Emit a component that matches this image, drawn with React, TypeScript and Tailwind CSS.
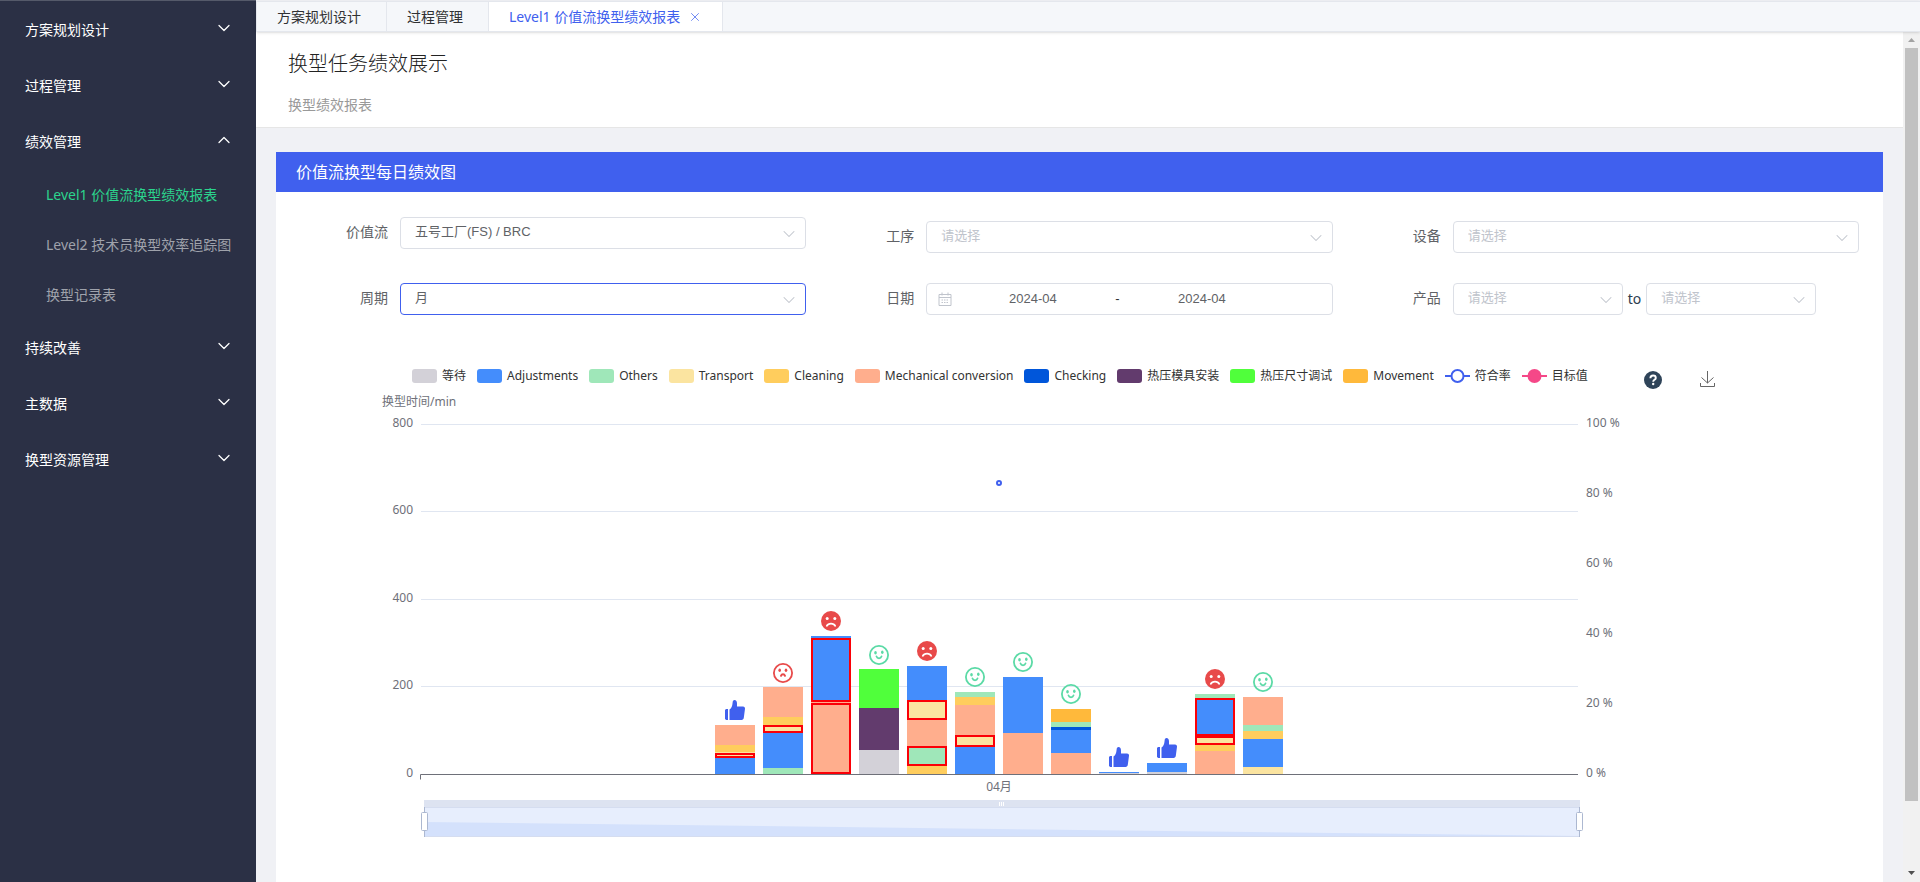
import { ReactNode } from 'react'
import { ChevronDown, ChevronUp, X } from 'lucide-react'

const COLORS = {
  wait: '#d3d1d8',
  adjust: '#448dfc',
  others: '#9fe7b9',
  transport: '#fbe4a0',
  cleaning: '#ffcd5d',
  mechanical: '#ffae8d',
  checking: '#0056da',
  mould: '#623b6d',
  size: '#50ff3b',
  movement: '#ffb93b',
}

type ColorKey = keyof typeof COLORS
type Mood = 'like' | 'smile' | 'sad' | 'sadFilled'

interface Segment {
  key: ColorKey
  h: number
  alert?: boolean
}

interface BarData {
  mood: Mood
  moodY: number
  // Listed from the axis upwards
  segments: Segment[]
}

const BASE = 385
const BAR_START = 439
const BAR_STEP = 48
const BAR_WIDTH = 40

const bars: BarData[] = [
  {
    mood: 'like',
    moodY: 311,
    segments: [
      { key: 'adjust', h: 16 },
      { key: 'transport', h: 5, alert: true },
      { key: 'transport', h: 1 },
      { key: 'cleaning', h: 7 },
      { key: 'mechanical', h: 20 },
    ],
  },
  {
    mood: 'sad',
    moodY: 274,
    segments: [
      { key: 'others', h: 6 },
      { key: 'adjust', h: 35 },
      { key: 'transport', h: 8, alert: true },
      { key: 'cleaning', h: 8 },
      { key: 'mechanical', h: 30 },
    ],
  },
  {
    mood: 'sadFilled',
    moodY: 222,
    segments: [
      { key: 'mechanical', h: 71, alert: true },
      { key: 'mechanical', h: 1 },
      { key: 'adjust', h: 64, alert: true },
      { key: 'adjust', h: 2 },
    ],
  },
  {
    mood: 'smile',
    moodY: 256,
    segments: [
      { key: 'wait', h: 24 },
      { key: 'mould', h: 42 },
      { key: 'size', h: 39 },
    ],
  },
  {
    mood: 'sadFilled',
    moodY: 252,
    segments: [
      { key: 'cleaning', h: 8 },
      { key: 'others', h: 20, alert: true },
      { key: 'mechanical', h: 26 },
      { key: 'transport', h: 20, alert: true },
      { key: 'adjust', h: 34 },
    ],
  },
  {
    mood: 'smile',
    moodY: 278,
    segments: [
      { key: 'adjust', h: 27 },
      { key: 'transport', h: 12, alert: true },
      { key: 'mechanical', h: 30 },
      { key: 'cleaning', h: 8 },
      { key: 'others', h: 5 },
    ],
  },
  {
    mood: 'smile',
    moodY: 263,
    segments: [
      { key: 'mechanical', h: 41 },
      { key: 'adjust', h: 56 },
    ],
  },
  {
    mood: 'smile',
    moodY: 295,
    segments: [
      { key: 'mechanical', h: 21 },
      { key: 'adjust', h: 23 },
      { key: 'checking', h: 3 },
      { key: 'others', h: 5 },
      { key: 'movement', h: 13 },
    ],
  },
  {
    mood: 'like',
    moodY: 358,
    segments: [
      { key: 'wait', h: 1 },
      { key: 'adjust', h: 1 },
    ],
  },
  {
    mood: 'like',
    moodY: 349,
    segments: [
      { key: 'wait', h: 2 },
      { key: 'adjust', h: 9 },
    ],
  },
  {
    mood: 'sadFilled',
    moodY: 280,
    segments: [
      { key: 'mechanical', h: 23 },
      { key: 'cleaning', h: 6 },
      { key: 'transport', h: 9, alert: true },
      { key: 'adjust', h: 38, alert: true },
      { key: 'others', h: 4 },
    ],
  },
  {
    mood: 'smile',
    moodY: 283,
    segments: [
      { key: 'transport', h: 7 },
      { key: 'adjust', h: 28 },
      { key: 'cleaning', h: 8 },
      { key: 'others', h: 6 },
      { key: 'mechanical', h: 28 },
    ],
  },
]

const legend: { label: string; key: ColorKey }[] = [
  { label: '等待', key: 'wait' },
  { label: 'Adjustments', key: 'adjust' },
  { label: 'Others', key: 'others' },
  { label: 'Transport', key: 'transport' },
  { label: 'Cleaning', key: 'cleaning' },
  { label: 'Mechanical conversion', key: 'mechanical' },
  { label: 'Checking', key: 'checking' },
  { label: '热压模具安装', key: 'mould' },
  { label: '热压尺寸调试', key: 'size' },
  { label: 'Movement', key: 'movement' },
]

function MoodIcon({ mood, x, y }: { mood: Mood; x: number; y: number }) {
  if (mood === 'like') {
    return (
      <g transform={`translate(${x} ${y})`} fill="#4060ee">
        <path d="M1 9h2v11H1.200L0 19V10z" />
        <path d="M4.500 20V9.400C6.400 8.300 7.300 6.500 7.600 2.800 7.700 1 8.400 0 9.400 0c1.800 0 2.600 1.500 2.600 3.400V6.500h6c1.400 0 2.200 1 2 2.300l-1.200 9c-.2 1.300-1 2.200-2.200 2.200z" />
      </g>
    )
  }
  if (mood === 'smile') {
    return (
      <g transform={`translate(${x} ${y})`} fill="none" stroke="#5bdaa6">
        <circle cx="10" cy="10" r="9.100" strokeWidth="1.800" />
        <ellipse cx="6.500" cy="7.700" rx="1.300" ry="1.700" fill="#5bdaa6" stroke="none" />
        <ellipse cx="13.300" cy="7.300" rx="1.300" ry="1.700" fill="#5bdaa6" stroke="none" />
        <path d="M7.400 11.300c.5 1.500 1.500 2 2.600 2s2.100-.5 2.600-2" strokeWidth="1.700" strokeLinecap="round" />
      </g>
    )
  }
  if (mood === 'sad') {
    return (
      <g transform={`translate(${x} ${y})`} fill="none" stroke="#e84a4a">
        <circle cx="10" cy="10" r="9.100" strokeWidth="1.800" />
        <ellipse cx="6.700" cy="7.300" rx="1.300" ry="1.700" fill="#e84a4a" stroke="none" />
        <ellipse cx="13" cy="7.300" rx="1.300" ry="1.700" fill="#e84a4a" stroke="none" />
        <path d="M8 12.800c.4-1.100 1.100-1.500 2-1.500s1.600.4 2 1.500" strokeWidth="2" strokeLinecap="round" />
      </g>
    )
  }
  return (
    <g transform={`translate(${x} ${y})`}>
      <circle cx="10" cy="10" r="10" fill="#e84a4a" />
      <circle cx="6.200" cy="7.400" r="1.500" fill="#fff" />
      <circle cx="13.800" cy="7.400" r="1.500" fill="#fff" />
      <path d="M5.800 14.800c.8-1.500 2.200-2.200 4.200-2.200s3.400.7 4.200 2.200" fill="none" stroke="#fff" strokeWidth="1.800" strokeLinecap="round" />
    </g>
  )
}

function Bar({ bar, index }: { bar: BarData; index: number }) {
  const x = BAR_START + index * BAR_STEP
  let top = BASE

  const rects = bar.segments.map((s, i) => {
    top -= s.h
    return s.alert ? (
      <rect key={i} x={x + 1} y={top + 1} width={BAR_WIDTH - 2} height={s.h - 2} fill={COLORS[s.key]} stroke="#fb0007" strokeWidth="2" />
    ) : (
      <rect key={i} x={x} y={top} width={BAR_WIDTH} height={s.h} fill={COLORS[s.key]} />
    )
  })

  return (
    <g>
      {rects}
      <MoodIcon mood={bar.mood} x={x + 10} y={bar.moodY} />
    </g>
  )
}

function Chart() {
  return (
    <svg viewBox="0 0 1607 493" className="block w-full text-[12px]" fill="#6e7079" role="img" aria-label="换型时间/min">
      <text x="106" y="17">换型时间/min</text>

      {/* Left axis */}
      {[800, 600, 400, 200, 0].map((v) => {
        const y = Math.floor(BASE - v * 0.4375)
        return (
          <g key={v}>
            {v > 0 && <path d={`M145 ${y + 0.5}H1302`} stroke="#e0e6f1" />}
            <text x="137" y={y + 3} textAnchor="end">{v}</text>
          </g>
        )
      })}

      {/* Right axis */}
      {[100, 80, 60, 40, 20, 0].map((v) => (
        <text key={v} x="1310" y={BASE + 3 - v * 3.5}>{v} %</text>
      ))}

      {bars.map((bar, i) => (
        <Bar key={i} bar={bar} index={i} />
      ))}

      <path d="M144.500 390.500V385.500H1302" fill="none" stroke="#6e7079" />
      <text x="723" y="402" textAnchor="middle">04月</text>
      <circle cx="723" cy="94" r="2" fill="#fff" stroke="#4060ee" strokeWidth="2" />

      {/* Data zoom */}
      <path d="M148 411h1156v7H148z" fill="#dde3f1" />
      <path d="M148 418h1156v29H148z" fill="#e7eefd" />
      <path d="M148 433L1304 447H148z" fill="#d4e1fc" />
      <path d="M148 418.500H1304M148 447.500H1304" stroke="#d5ddf0" />
      <path d="M723.500 413v4M725.500 413v4M727.500 413v4" stroke="#fff" />
      <path d="M148.500 418V448M1303.500 418V448" stroke="#acb8d1" />
      <rect x="145.500" y="423.500" width="6" height="18" rx="1" fill="#fff" stroke="#acb8d1" />
      <rect x="1300.500" y="423.500" width="6" height="18" rx="1" fill="#fff" stroke="#acb8d1" />
    </svg>
  )
}

function MenuGroup({ label, open, children }: { label: string; open?: boolean; children?: ReactNode }) {
  const Arrow = open ? ChevronUp : ChevronDown
  return (
    <li>
      <button className="flex h-14 w-full items-center justify-between pl-[25px] pr-[22px] text-white">
        <span>{label}</span>
        <Arrow className="mb-1 h-5 w-5" strokeWidth={1.5} />
      </button>
      {children && <ul>{children}</ul>}
    </li>
  )
}

function MenuItem({ label, active }: { label: string; active?: boolean }) {
  return (
    <li>
      <a href="#" className={`flex h-[50px] items-center whitespace-nowrap pl-[46px] ${active ? 'text-[#2bd48d]' : 'text-[#9fa2ab]'}`}>
        {label}
      </a>
    </li>
  )
}

function Field({ label, id, children }: { label: string; id: string; children: ReactNode }) {
  return (
    <div className="flex items-center">
      <label htmlFor={id} className="w-[120px] pb-0.5 pr-3 text-right text-[#606266]">{label}</label>
      <div className="flex flex-1 items-center">{children}</div>
    </div>
  )
}

function Select({ id, value, focused, width = 'w-full' }: { id: string; value?: string; focused?: boolean; width?: string }) {
  return (
    <div className={`relative ${width}`}>
      <select
        id={id}
        aria-label={id}
        className={`block h-8 w-full appearance-none rounded border bg-white px-[14px] pb-0.5 text-[13px] outline-none ${
          focused ? 'border-[#4060ee]' : 'border-[#dcdfe6]'
        } ${value ? 'text-[#606266]' : 'text-[#c0c4cc]'}`}
      >
        <option>{value || '请选择'}</option>
      </select>
      <ChevronDown className="pointer-events-none absolute right-[7px] top-[7px] h-5 w-5 text-[#c0c4cc]" strokeWidth={1.25} />
    </div>
  )
}

function CalendarIcon() {
  return (
    <svg className="h-[14px] w-[14px] shrink-0" viewBox="0 0 14 14" fill="none" stroke="#c0c4cc">
      <path d="M1 2.500h12v11H1zM1 5.500h12M4 .5v3M10 .5v3" />
      <path d="M3.500 8h7M3.500 10.500h7" strokeDasharray="1.500 1" />
    </svg>
  )
}

function LineMark({ color, fill }: { color: string; fill: string }) {
  return (
    <svg width="25" height="14" viewBox="0 0 25 14">
      <path d="M0 7h25" stroke={color} strokeWidth="2" />
      <circle cx="12.500" cy="7" r="6" fill={fill} stroke={color} strokeWidth="2" />
    </svg>
  )
}

export default function App() {
  return (
    <div className="flex h-screen overflow-hidden bg-[#f0f1f5] font-['Noto_Sans','Noto_Sans_CJK_SC',sans-serif] text-[14px] leading-5">
      {/* Sidebar */}
      <nav className="w-64 shrink-0 border-t border-[#555a6a] bg-[#2b3045] pt-px">
        <ul>
          <MenuGroup label="方案规划设计" />
          <MenuGroup label="过程管理" />
          <MenuGroup label="绩效管理" open>
            <MenuItem label="Level1 价值流换型绩效报表" active />
            <MenuItem label="Level2 技术员换型效率追踪图" />
            <MenuItem label="换型记录表" />
          </MenuGroup>
          <MenuGroup label="持续改善" />
          <MenuGroup label="主数据" />
          <MenuGroup label="换型资源管理" />
        </ul>
      </nav>

      <div className="flex min-w-0 flex-1 flex-col pt-px">
        {/* Tabs */}
        <div className="relative flex h-[31px] shrink-0 border-y border-[#e4e7ed] bg-[#f5f7fa] text-[#303133] shadow-sm">
          <button className="border-x border-[#e4e7ed] pl-5 pr-[25px]">方案规划设计</button>
          <button className="border-r border-[#e4e7ed] pl-5 pr-[25px]">过程管理</button>
          <div className="flex items-center gap-2 border-r border-[#e4e7ed] bg-white px-5 text-[#4060ee]">
            <button>Level1 价值流换型绩效报表</button>
            <button aria-label="关闭"><X className="h-[14px] w-[14px]" strokeWidth={1.25} /></button>
          </div>
        </div>

        <div className="flex min-h-0 flex-1">
          <main className="flex min-w-0 flex-1 flex-col">
            <header className="h-24 shrink-0 border-b border-[#e6e6e6] bg-white px-8 pt-[18px]">
              <h1 className="text-[20px] font-light leading-7 text-[#222]">换型任务绩效展示</h1>
              <p className="mt-[17px] text-[#999]">换型绩效报表</p>
            </header>

            <section className="mx-5 mt-6 flex-1 bg-white">
              <h2 className="flex h-10 items-center bg-[#4060ee] px-5 text-[16px] text-white">价值流换型每日绩效图</h2>

              <form className="grid grid-cols-3 items-start gap-y-[30px] pl-1 pr-6 pt-[25px] font-['Liberation_Sans','Noto_Sans_CJK_SC',sans-serif]">
                <Field label="价值流" id="stream">
                  <Select id="stream" value="五号工厂(FS) / BRC" />
                </Field>
                <div className="pt-1">
                  <Field label="工序" id="process">
                    <Select id="process" />
                  </Field>
                </div>
                <div className="pt-1">
                  <Field label="设备" id="device">
                    <Select id="device" />
                  </Field>
                </div>
                <Field label="周期" id="period">
                  <Select id="period" value="月" focused />
                </Field>
                <Field label="日期" id="from">
                  <div className="flex h-8 w-full items-center rounded border border-[#dcdfe6] px-[11px] text-[13px] text-[#606266]">
                    <CalendarIcon />
                    <input id="from" className="ml-1.5 w-[39%] min-w-0 text-center outline-none" defaultValue="2024-04" />
                    <span className="w-5 text-center text-[#303133]">-</span>
                    <input aria-label="结束日期" className="w-[39%] min-w-0 text-center outline-none" defaultValue="2024-04" />
                  </div>
                </Field>
                <Field label="产品" id="productFrom">
                  <Select id="productFrom" width="w-[170px]" />
                  <span className="px-[5px] font-['Noto_Sans'] text-[#2c3e50]">to</span>
                  <Select id="productTo" width="w-[170px]" />
                </Field>
              </form>

              {/* Legend and chart tools */}
              <div className="mt-[54px] flex h-5 pl-[136px] text-[12px] leading-[14px] text-[#333]">
                <ul className="flex gap-[11px] whitespace-nowrap">
                  {legend.map((item) => (
                    <li key={item.key} className="flex h-[14px] items-center gap-[5px]">
                      <span className="h-[14px] w-[25px] rounded-[3px]" style={{ background: COLORS[item.key] }} />
                      {item.label}
                    </li>
                  ))}
                  <li className="flex h-[14px] items-center gap-[5px]">
                    <LineMark color="#4060ee" fill="#fff" />
                    符合率
                  </li>
                  <li className="flex h-[14px] items-center gap-[5px]">
                    <LineMark color="#f54888" fill="#f54888" />
                    目标值
                  </li>
                </ul>
                <div className="ml-14 flex items-end gap-9">
                  <button aria-label="帮助">
                    <svg width="18" height="18" viewBox="0 0 18 18" className="block">
                      <circle cx="9" cy="9" r="9" fill="#2f4459" />
                      <path d="M6.400 7.200C6.400 5.500 7.500 4.500 9.100 4.500s2.700 1 2.700 2.400c0 1.900-2.600 1.900-2.600 3.800" fill="none" stroke="#fff" strokeWidth="1.900" />
                      <circle cx="9.200" cy="13" r="1.200" fill="#fff" />
                    </svg>
                  </button>
                  <button aria-label="下载">
                    <svg width="18" height="18" viewBox="0 0 18 18" className="block" fill="none" stroke="#666">
                      <path d="M9.500 0v12M3.500 6.500l6 5.500 6-5.500M2.500 12v3.500h14V12" />
                    </svg>
                  </button>
                </div>
              </div>

              <Chart />
            </section>
          </main>

          {/* Scroll bar */}
          <div className="flex w-[17px] shrink-0 flex-col items-center bg-[#f1f1f1]">
            <svg width="17" height="16" viewBox="0 0 17 16">
              <path d="M5 10h7L8.500 6z" fill="#a3a3a3" />
            </svg>
            <div className="w-[13px] flex-1 bg-[#c1c1c1]" />
            <div className="h-16" />
            <svg width="17" height="17" viewBox="0 0 17 17">
              <path d="M5 6h7L8.500 10z" fill="#505050" />
            </svg>
          </div>
        </div>
      </div>
    </div>
  )
}
